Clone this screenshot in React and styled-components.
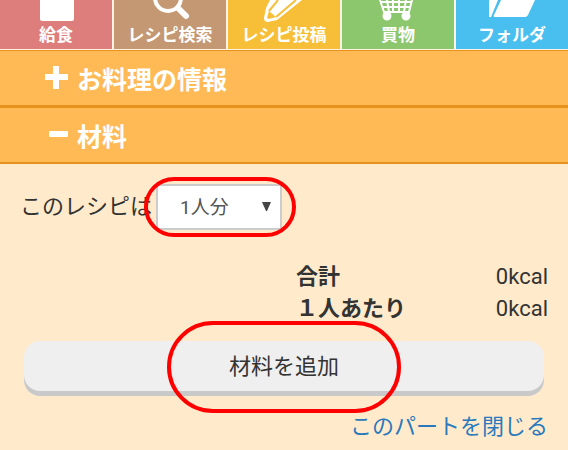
import React, { useState } from 'react';
import styled, { createGlobalStyle } from 'styled-components';

const GlobalStyle = createGlobalStyle`
  * {
    box-sizing: border-box;
  }

  body {
    margin: 0;
    background-color: #ffebcb;
    color: #333;
    font-family: Roboto, 'Noto Sans CJK JP', sans-serif;
    font-size: 22px;
    line-height: 32px;
    overflow-x: hidden;
  }

  button, select {
    font-family: inherit;
    color: inherit;
  }
`;

const NavBar = styled.nav`
  display: grid;
  grid-template-columns: repeat(5, 1fr);
  gap: 2px;
  padding-bottom: 1px;
  background-color: #fff4e4;
`;

const NavItem = styled.a`
  display: flex;
  flex-direction: column;
  align-items: center;
  height: 49px;
  background-color: ${(props) => props.$color};
  color: #fff;
  font-size: 17px;
  font-weight: bold;
  line-height: 24px;
  text-decoration: none;
  white-space: nowrap;

  svg {
    display: block;
    flex: none;
    width: 60px;
    height: 23px;
  }
`;

const SectionBar = styled.button`
  display: flex;
  align-items: center;
  gap: 8px;
  width: 100%;
  height: 57px;
  padding: 0 44px 1px;
  border: 0;
  border-top: 1px solid #e6921d;
  border-bottom: 2px solid #e6921d;
  background-color: #ffba55;
  color: #fff;
  font-size: 25px;
  font-weight: bold;
  cursor: pointer;

  svg {
    width: 25px;
    height: 25px;
  }
`;

const Panel = styled.div`
  padding: 20px 20px 0;
`;

const ServingRow = styled.div`
  display: flex;
  align-items: center;
  gap: 4px;
  white-space: nowrap;
`;

const Highlight = styled.span`
  position: relative;
  display: ${(props) => (props.$block ? 'block' : 'inline-block')};

  &::after {
    content: '';
    position: absolute;
    inset: ${(props) => props.$inset};
    border: 4px solid #f00;
    border-radius: ${(props) => props.$radius};
    pointer-events: none;
  }
`;

const SelectBox = styled.span`
  position: relative;
  display: block;

  svg {
    position: absolute;
    top: 17px;
    right: 10px;
    width: 11px;
    height: 11px;
    pointer-events: none;
  }
`;

const Select = styled.select`
  display: block;
  width: 126px;
  height: 46px;
  padding: 0 22px;
  appearance: none;
  border: 2px solid #ccc;
  border-radius: 2px;
  background-color: #fff;
  color: #555;
  font-size: 19px;
`;

const Totals = styled.table`
  width: 252px;
  margin: 31px 0 16px auto;
  border-collapse: collapse;

  th, td {
    padding: 0;
    white-space: nowrap;
  }

  th {
    text-align: left;
  }

  td {
    text-align: right;
  }
`;

const AddRow = styled.div`
  padding: 0 4px;
`;

const AddButton = styled.button`
  display: block;
  width: 100%;
  height: 55px;
  padding: 0 0 10px;
  border: 0;
  border-radius: 16px;
  background-color: #efefef;
  box-shadow: inset 0 -5px #c9c9c9;
  font-size: 22px;
  cursor: pointer;
`;

const CloseRow = styled.div`
  margin-top: 15px;
  text-align: right;
`;

const CloseLink = styled.a`
  color: #2a79bd;
  text-decoration: none;
`;

const LunchIcon = () => (
  <svg viewBox="0 0 60 23" fill="#fff" aria-hidden="true">
    <path d="M14 0H48V19Q48 21 46 21H16Q14 21 14 19Z" />
  </svg>
);

const SearchIcon = () => (
  <svg viewBox="0 0 60 23" fill="none" stroke="#fff" aria-hidden="true">
    <circle cx="28" cy="-2" r="13" strokeWidth="4" />
    <path d="M38 8L46 16" strokeWidth="6" strokeLinecap="round" />
  </svg>
);

const PencilIcon = () => (
  <svg viewBox="0 0 60 23" fill="none" aria-hidden="true">
    <path d="M16 0L12 8L10 18Q10 22 14 22L23 20L48 0Z" fill="#fff" />
    <path d="M15 11L13 18L15 19L22 17Z" fill="#f7bf38" />
    <path d="M15 11L24 0M22 17L42 0" stroke="#f7bf38" strokeWidth="2" />
  </svg>
);

const CartIcon = () => (
  <svg viewBox="0 0 60 23" fill="none" stroke="#fff" strokeWidth="2" aria-hidden="true">
    <path d="M12 0L16 12H41L44 0M13 2H44M14 7H43M19 0L21 12M25 0V12M31 0V12M38 0L36 12" />
    <circle cx="19" cy="16" r="3.5" fill="#fff" />
    <circle cx="38" cy="16" r="3.5" fill="#fff" />
  </svg>
);

const FolderIcon = () => (
  <svg viewBox="0 0 60 23" fill="#fff" aria-hidden="true">
    <path d="M7 0H16L9 17H7Z" />
    <path d="M19 0H53L46 15Q45 17 43 17H13Q11 17 12 15Z" />
  </svg>
);

const navItems = [
  { label: '給食', color: '#de7e7c', Icon: LunchIcon },
  { label: 'レシピ検索', color: '#c49873', Icon: SearchIcon },
  { label: 'レシピ投稿', color: '#f7bf38', Icon: PencilIcon },
  { label: '買物', color: '#8cc66d', Icon: CartIcon },
  { label: 'フォルダ', color: '#48bfef', Icon: FolderIcon },
];

const App = () => {
  const [servings, setServings] = useState('1');

  return (
    <>
      <GlobalStyle />
      <NavBar>
        {navItems.map(({ label, color, Icon }) => (
          <NavItem key={label} href="#" $color={color}>
            <Icon />
            {label}
          </NavItem>
        ))}
      </NavBar>

      <SectionBar type="button" aria-expanded="false">
        <svg viewBox="0 0 25 25" fill="#fff" aria-hidden="true">
          <path d="M9 1H15V9H24V15H15V24H9V15H1V9H9Z" />
        </svg>
        お料理の情報
      </SectionBar>
      <SectionBar type="button" aria-expanded="true">
        <svg viewBox="0 0 25 25" fill="#fff" aria-hidden="true">
          <rect x="5" y="9" width="19" height="6" rx="1" />
        </svg>
        材料
      </SectionBar>

      <Panel>
        <ServingRow>
          <label htmlFor="servings">このレシピは</label>
          <Highlight $inset="-7px -14px -7px -12px" $radius="30px">
            <SelectBox>
              <Select id="servings" value={servings} onChange={(e) => setServings(e.target.value)}>
                <option value="1">1人分</option>
                <option value="2">2人分</option>
                <option value="4">4人分</option>
              </Select>
              <svg viewBox="0 0 11 11" fill="#444" aria-hidden="true">
                <path d="M1 1H10L6 10H5Z" />
              </svg>
            </SelectBox>
          </Highlight>
        </ServingRow>

        <Totals>
          <tbody>
            <tr>
              <th scope="row">合計</th>
              <td>0kcal</td>
            </tr>
            <tr>
              <th scope="row">１人あたり</th>
              <td>0kcal</td>
            </tr>
          </tbody>
        </Totals>

        <AddRow>
          <Highlight $block $inset="-20px 143px -17px" $radius="46px">
            <AddButton type="button">材料を追加</AddButton>
          </Highlight>
        </AddRow>

        <CloseRow>
          <CloseLink href="#">このパートを閉じる</CloseLink>
        </CloseRow>
      </Panel>
    </>
  );
};

export default App;
